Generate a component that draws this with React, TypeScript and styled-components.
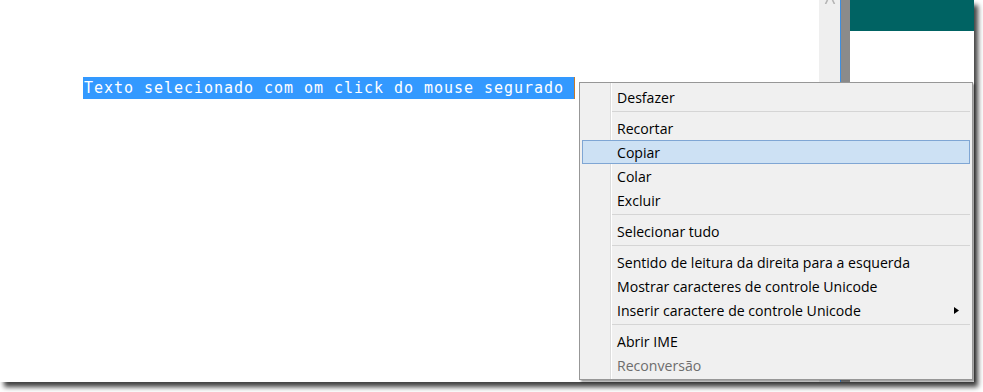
import React from "react";
import styled, { createGlobalStyle } from "styled-components";

const GlobalStyle = createGlobalStyle`
  html, body, #root {
    margin: 0;
    padding: 0;
    height: 100%;
    background: #ffffff;
  }
`;

const Screen = styled.div`
  width: 983px;
  height: 392px;
  overflow: hidden;
  background: #ffffff;
`;

const Window = styled.div`
  position: relative;
  display: flex;
  width: 974px;
  height: 382px;
  background: #ffffff;
  box-shadow: 4px 5px 5px rgba(0, 0, 0, 0.75);
`;

const Editor = styled.div`
  flex: 1;
  padding: 77px 0 0 83px;
  font-family: "DejaVu Sans Mono", "Liberation Mono", monospace;
  font-size: 15px;
  letter-spacing: 0.97px;
`;

const Selection = styled.span`
  display: inline-block;
  height: 22px;
  line-height: 22px;
  padding-left: 1px;
  background: #3399ff;
  color: #ffffff;
  white-space: pre;
  border-right: 1px solid #c47a2c;
`;

const Scrollbar = styled.div`
  width: 21px;
  background: #efefef;
  display: flex;
  justify-content: center;
  align-items: flex-start;
`;

const Splitter = styled.div`
  width: 9px;
  background: #8b8b8b;
  border-left: 1px solid #3f8fe0;
`;

const SidePane = styled.div`
  width: 124px;
  display: flex;
  flex-direction: column;
`;

const SideHeader = styled.div`
  height: 31px;
  background: #006363;
`;

const Menu = styled.div`
  position: absolute;
  left: 579px;
  top: 82px;
  width: 394px;
  box-sizing: border-box;
  padding: 2px;
  border: 1px solid #979797;
  background-color: #f0f0f0;
  background-image: linear-gradient(
    to right,
    transparent 30px,
    #dcdcdc 30px,
    #dcdcdc 31px,
    #ffffff 31px,
    #ffffff 32px,
    transparent 32px
  );
  box-shadow: 2px 2px 2px rgba(0, 0, 0, 0.38);
  font-family: "Open Sans", "Noto Sans", sans-serif;
  font-size: 14.1px;
`;

const Item = styled.div<{ $active?: boolean; $disabled?: boolean }>`
  display: flex;
  align-items: center;
  justify-content: space-between;
  height: 24px;
  box-sizing: border-box;
  padding: 0 11px 0 ${(p) => (p.$active ? "34px" : "35px")};
  color: ${(p) => (p.$disabled ? "#6d6d6d" : "#000000")};
  background: ${(p) => (p.$active ? "#cde1f4" : "transparent")};
  border: 1px solid ${(p) => (p.$active ? "#7fa6d4" : "transparent")};
  border-left-width: ${(p) => (p.$active ? "1px" : "0")};
  border-right-width: ${(p) => (p.$active ? "1px" : "0")};
`;

const Separator = styled.div`
  height: 7px;
  box-sizing: border-box;
  padding: 2px 0 0 30px;
  &::after {
    content: "";
    display: block;
    height: 1px;
    background: #d5d5d5;
  }
`;

const SubArrow = () => (
  <svg width="5" height="7" viewBox="0 0 5 7">
    <path d="M0 0 L5 3.5 L0 7 Z" fill="#000" />
  </svg>
);

const ScrollUpGlyph = () => (
  <svg width="12" height="4" viewBox="0 0 12 4">
    <path d="M1.5 4 L3.5 0 M10.5 4 L8.5 0" stroke="#b4b4b4" strokeWidth="1.6" fill="none" />
  </svg>
);

const menu: (
  | { label: string; disabled?: boolean; active?: boolean; sub?: boolean }
  | "sep"
)[] = [
  { label: "Desfazer" },
  "sep",
  { label: "Recortar" },
  { label: "Copiar", active: true },
  { label: "Colar" },
  { label: "Excluir" },
  "sep",
  { label: "Selecionar tudo" },
  "sep",
  { label: "Sentido de leitura da direita para a esquerda" },
  { label: "Mostrar caracteres de controle Unicode" },
  { label: "Inserir caractere de controle Unicode", sub: true },
  "sep",
  { label: "Abrir IME" },
  { label: "Reconversão", disabled: true },
];

const App: React.FC = () => {
  return (
    <Screen>
      <GlobalStyle />
      <Window>
        <Editor>
          <Selection>Texto selecionado com om click do mouse segurado </Selection>
        </Editor>
        <Scrollbar>
          <ScrollUpGlyph />
        </Scrollbar>
        <Splitter />
        <SidePane>
          <SideHeader />
        </SidePane>
        <Menu>
          {menu.map((m, i) =>
            m === "sep" ? (
              <Separator key={i} />
            ) : (
              <Item key={i} $active={m.active} $disabled={m.disabled}>
                <span>{m.label}</span>
                {m.sub && <SubArrow />}
              </Item>
            )
          )}
        </Menu>
      </Window>
    </Screen>
  );
};

export default App;
